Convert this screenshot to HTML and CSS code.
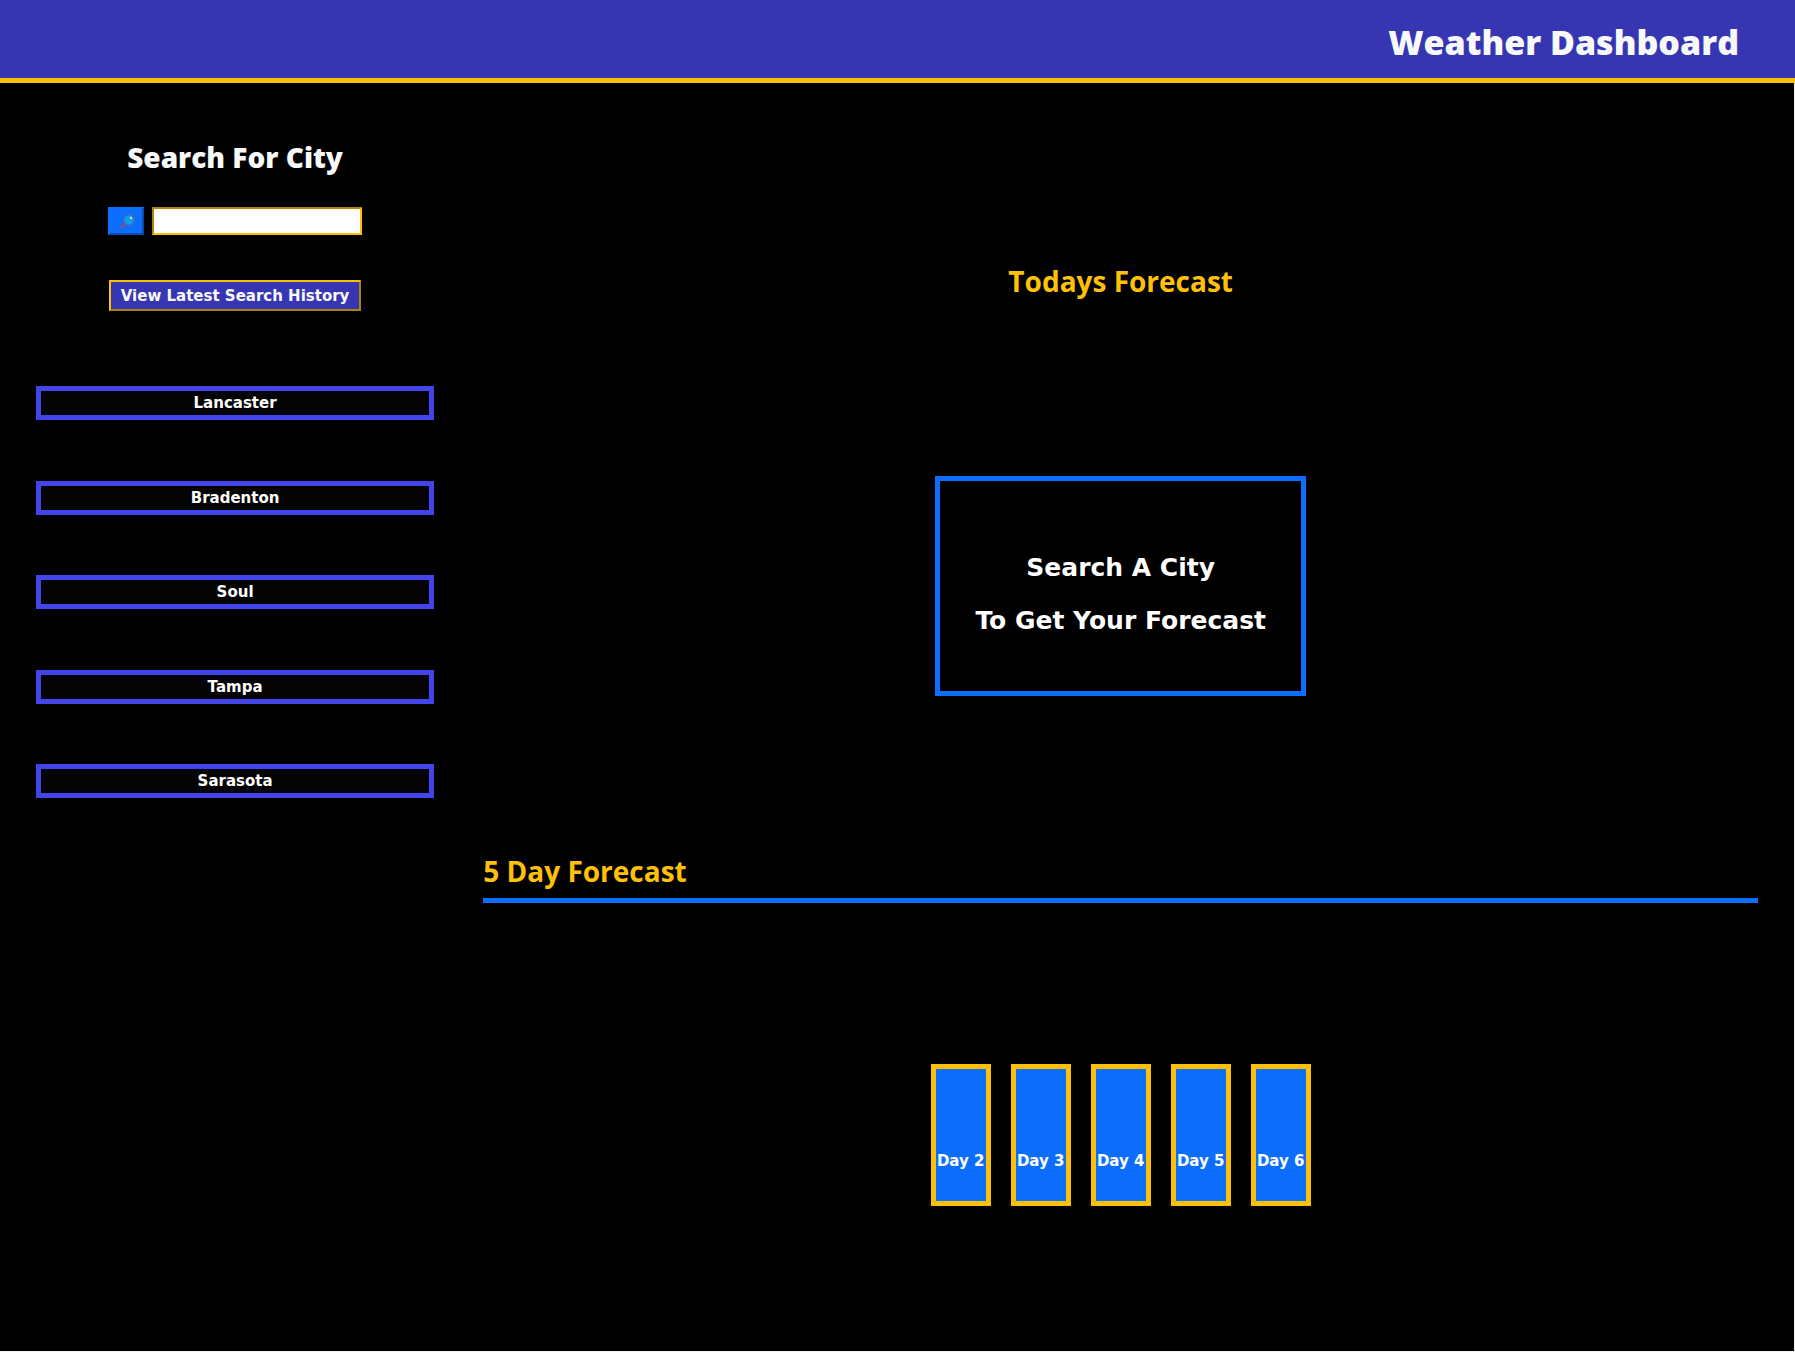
FILE: index.html
```html
<!DOCTYPE html>
<html lang="en">
<head>
<meta charset="utf-8">
<title>Weather Dashboard</title>
<link rel="stylesheet" href="styles.css">
</head>
<body>
<header class="site-header">
  <h1 class="site-title">Weather Dashboard</h1>
</header>
<main class="dashboard">
  <aside class="sidebar">
    <h2 class="search-title"><label for="city">Search For City</label></h2>
    <form class="search-form">
      <button class="search-button" type="button" aria-label="Search">
        <svg class="search-icon" viewBox="0 0 15 15" aria-hidden="true">
          <path d="M5.4 9.4 1.6 13.2" stroke="#6b5a94" stroke-width="3" stroke-linecap="round"/>
          <circle cx="8.9" cy="6" r="4.8" fill="#00a4ef" stroke="#5f6aa5" stroke-width="1.2"/>
          <circle cx="11" cy="3.9" r="1.1" fill="#d5f1ff"/>
        </svg>
      </button>
      <input class="search-input" id="city" type="text">
    </form>
    <button class="history-button" type="button">View Latest Search History</button>
    <div class="city-list">
      <button class="city" type="button">Lancaster</button>
      <button class="city" type="button">Bradenton</button>
      <button class="city" type="button">Soul</button>
      <button class="city" type="button">Tampa</button>
      <button class="city" type="button">Sarasota</button>
    </div>
  </aside>
  <div class="forecast">
    <section class="today">
      <h2 class="forecast-title">Todays Forecast</h2>
      <div class="today-card">
        <p class="today-line">Search A City</p>
        <p class="today-line">To Get Your Forecast</p>
      </div>
    </section>
    <section class="week">
      <h2 class="forecast-title week-title">5 Day Forecast</h2>
      <div class="days">
        <article class="day">Day 2</article>
        <article class="day">Day 3</article>
        <article class="day">Day 4</article>
        <article class="day">Day 5</article>
        <article class="day">Day 6</article>
      </div>
    </section>
  </div>
</main>
</body>
</html>
```
FILE: styles.css
```css
* {
  box-sizing: border-box;
}

body {
  display: flex;
  flex-direction: column;
  min-height: 100vh;
  margin: 0;
  background: #f0eeee;
  color: #fff;
  font: bold 15px/24px "DejaVu Sans", Verdana, sans-serif;
}

h1,
h2,
p {
  margin: 0;
}

button,
input {
  font: inherit;
  color: inherit;
}

.site-header {
  padding: 18px 56px 12px;
  border-bottom: 5px solid #ffc107;
  background: #3636b3;
  text-align: right;
}

.site-title {
  color: #f8f9fa;
  font: 800 34px/48px "Open Sans", "Noto Sans", sans-serif;
}

.dashboard {
  display: grid;
  flex: 1;
  grid-template-columns: 5fr 16fr;
  column-gap: 49px;
  margin: 0 1px 1px 0;
  padding: 0 2%;
  background: #000;
}

.sidebar {
  display: flex;
  flex-direction: column;
  align-items: center;
  padding-top: 56px;
}

.search-title {
  color: #f8f9fa;
  font: 800 28px/36px "Open Sans", "Noto Sans", sans-serif;
}

.search-form {
  display: flex;
  gap: 8px;
  margin-top: 32px;
}

.search-button {
  display: grid;
  place-items: center;
  width: 36px;
  height: 28px;
  padding: 0 0 0 2px;
  border: 2px solid;
  border-color: #0d6efd #0a4bac #0a4bac #0d6efd;
  background: #0d6efd;
}

.search-icon {
  width: 15px;
  height: 15px;
  fill: none;
}

.search-input {
  width: 210px;
  height: 28px;
  border: 2px solid;
  border-color: #ae8405 #ffc107 #ffc107 #ae8405;
  background: #fff;
  color: #000;
}

.history-button {
  height: 31px;
  margin-top: 45px;
  padding: 0 10px;
  border: 2px solid;
  border-color: #ffc107 #ae8405 #ae8405 #ffc107;
  background: #3636b3;
  color: #f8f9fa;
}

.city-list {
  display: flex;
  flex-direction: column;
  align-self: stretch;
  justify-content: space-between;
  min-height: 412px;
  margin-top: 75px;
}

.city {
  padding: 0;
  border: 5px solid #4444eb;
  background: #040404;
}

.today {
  display: flex;
  flex-direction: column;
  align-items: center;
  padding-top: 180px;
}

.forecast-title {
  color: #ffc107;
  font: bold 28px/36px "Open Sans", "Noto Sans", sans-serif;
}

.today-card {
  margin-top: 177px;
  padding: 60px 35px 44px;
  border: 5px solid #0d6efd;
  text-align: center;
}

.today-line {
  font-size: 25px;
  line-height: 53px;
}

.week {
  padding-top: 157px;
}

.week-title {
  padding-bottom: 9px;
  border-bottom: 5px solid #0d6efd;
}

.days {
  display: flex;
  justify-content: center;
  gap: 20px;
  padding: 161px 0 145px;
}

.day {
  width: 60px;
  padding: 80px 0 28px;
  border: 5px solid #ffc107;
  background: #0d6efd;
  text-align: center;
  white-space: nowrap;
}
```
